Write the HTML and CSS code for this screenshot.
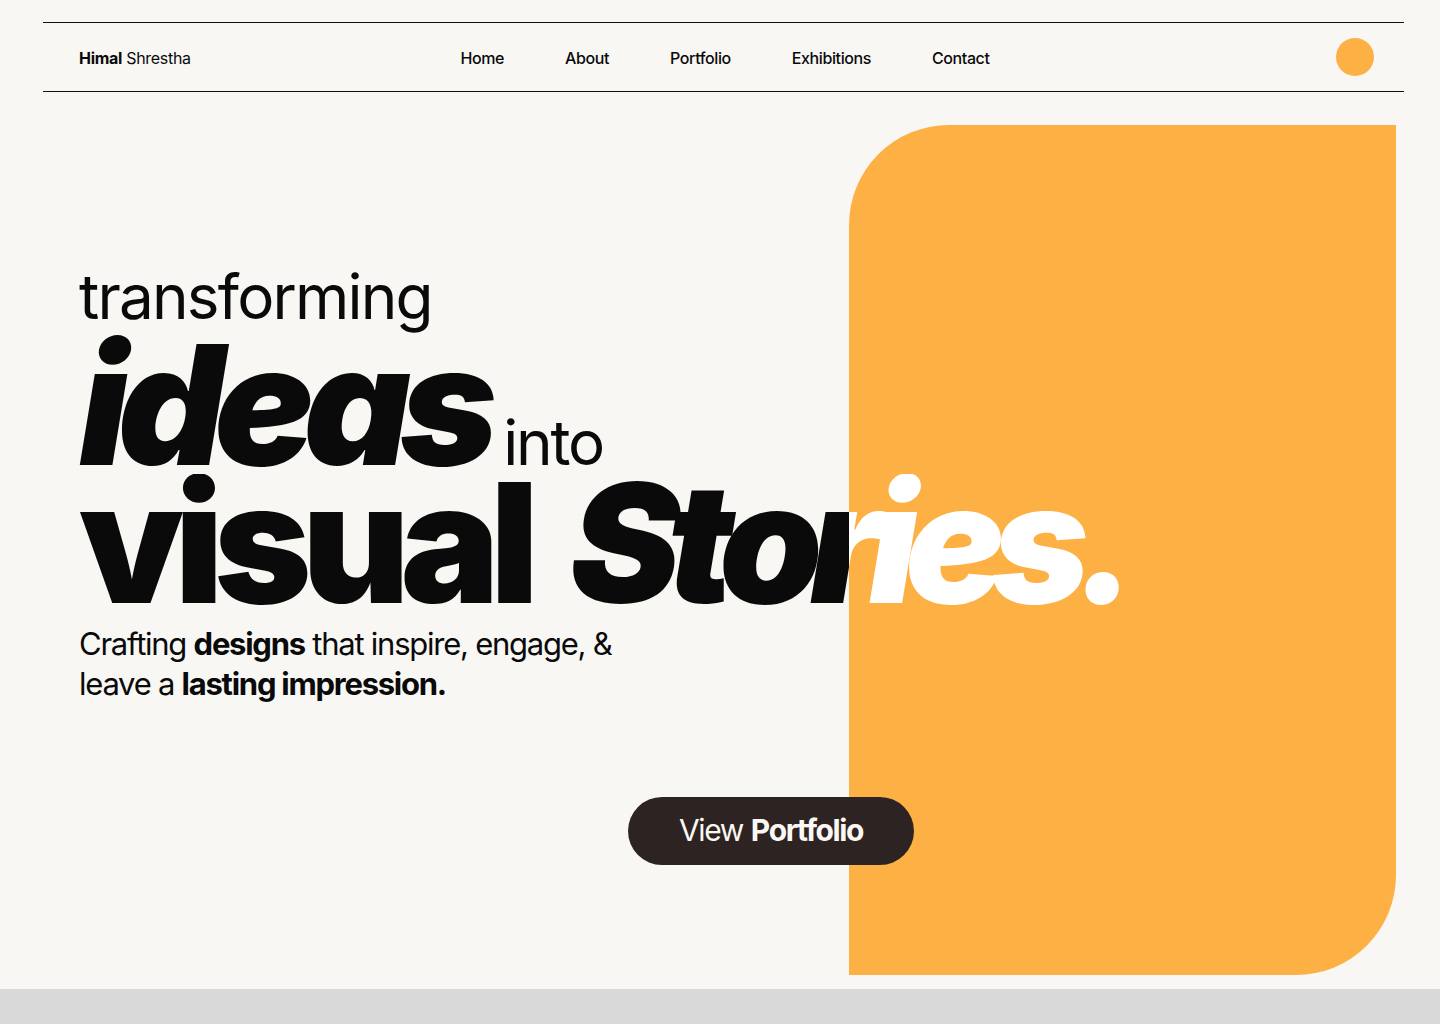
FILE: index.html
```html
<!DOCTYPE html>
<html lang="en">
<head>
<meta charset="utf-8">
<title>Himal Shrestha</title>
<link rel="stylesheet" href="styles.css">
</head>
<body>
<div class="page">
  <header class="site-header">
    <a class="logo" href="#"><b>Himal</b> Shrestha</a>
    <nav class="nav">
      <a href="#">Home</a>
      <a href="#">About</a>
      <a href="#">Portfolio</a>
      <a href="#">Exhibitions</a>
      <a href="#">Contact</a>
    </nav>
    <span class="dot"></span>
  </header>

  <section class="hero">
    <div class="panel"></div>
    <div class="hero-content">
      <div class="line-one">transforming</div>
      <div class="line-two"><span class="ideas">ideas</span><span class="into">into</span></div>
      <div class="line-three"><span class="visual">visual</span> <span class="stories">Stories.</span></div>
      <p class="tagline">Crafting <strong>designs</strong> that inspire, engage, &amp;<br>leave a <strong>lasting impression.</strong></p>
      <a class="cta" href="#">View <strong>Portfolio</strong></a>
    </div>
  </section>
</div>
<footer class="strip"></footer>
</body>
</html>
```

FILE: styles.css
```css
* { box-sizing: border-box; }

html, body {
  margin: 0;
  padding: 0;
}

body {
  background: #d9d9d9;
  font-family: Inter, "Noto Sans", sans-serif;
  color: #0a0a0a;
}

.page {
  background: #f8f7f4;
  padding-top: 22px;
}

a { color: inherit; text-decoration: none; }

.site-header {
  margin: 0 36px 0 43px;
  height: 70px;
  border-top: 1.5px solid #111;
  border-bottom: 1.5px solid #111;
  padding: 2px 30px 0 36px;
  display: grid;
  grid-template-columns: 1fr auto 1fr;
  align-items: center;
}

.logo {
  font-size: 16px;
  letter-spacing: -0.3px;
  font-weight: 400;
  justify-self: start;
}
.logo b { font-weight: 700; }

.nav {
  display: flex;
  gap: 61px;
  font-size: 16px;
  font-weight: 500;
  letter-spacing: -0.4px;
  margin-left: -3px;
}

.dot {
  justify-self: end;
  width: 38px;
  height: 38px;
  border-radius: 50%;
  background: #fdb145;
  margin-top: -2px;
}

.hero {
  margin: 0 44px 0 43px;
  display: grid;
  grid-template-columns: 1fr 547px;
  height: 897px;
}

.panel {
  grid-column: 2;
  grid-row: 1;
  margin-top: 33px;
  height: 850px;
  background: #fdb145;
  border-radius: 100px 0 100px 0;
}

.hero-content {
  grid-column: 1 / -1;
  grid-row: 1;
  padding: 168px 0 0 36px;
  position: relative;
  z-index: 1;
}

.line-one {
  font-size: 62px;
  line-height: 73px;
  font-weight: 400;
  letter-spacing: -1.8px;
  margin-bottom: 3px;
}

.line-two,
.line-three {
  font-size: 166px;
  line-height: 138px;
  font-weight: 900;
  letter-spacing: -9px;
  white-space: nowrap;
}

.ideas, .stories { font-style: italic; }
.ideas { letter-spacing: -10.5px; }

.into {
  font-size: 62px;
  line-height: 0;
  font-weight: 400;
  letter-spacing: -2.2px;
  margin-left: 16px;
}

.line-three {
  background: linear-gradient(90deg, #0a0a0a 770px, #ffffff 770px);
  -webkit-background-clip: text;
  background-clip: text;
  color: transparent;
}

.visual { letter-spacing: -9.5px; }
.stories { margin-left: 16px; letter-spacing: -13px; }

.tagline {
  margin: 12px 0 0;
  font-size: 31px;
  line-height: 40px;
  letter-spacing: -1.25px;
  font-weight: 400;
}
.tagline strong { font-weight: 700; }

.cta {
  margin: 93px 0 0 549px;
  width: 286px;
  height: 68px;
  border-radius: 34px;
  background: #2d2323;
  color: #fbf7f2;
  display: flex;
  align-items: center;
  justify-content: center;
  gap: 8px;
  font-size: 30px;
  letter-spacing: -1.4px;
  font-weight: 400;
  padding-bottom: 2px;
}
.cta strong { font-weight: 700; }

.strip {
  height: 35px;
  background: #d9d9d9;
}
```
